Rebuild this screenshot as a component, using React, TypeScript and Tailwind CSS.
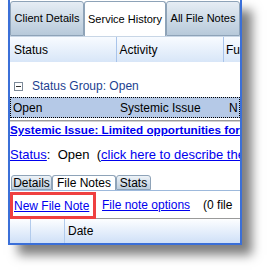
import React from "react";

function Tab({ label, active, w }: { label: string; active?: boolean; w: string }) {
  return (
    <div
      className={`${w} flex h-full items-center justify-center rounded-t-[3px] border border-[#8ea3b8] ${
        active ? "border-b-0 bg-white" : "bg-gradient-to-b from-[#e6edf4] to-[#b7c9da]"
      }`}
    >
      {label}
    </div>
  );
}

function SubTab({ label, active, w }: { label: string; active?: boolean; w: string }) {
  return (
    <div
      className={`${w} flex h-full items-center justify-center rounded-t-[3px] border border-[#8ea3b8] ${
        active ? "border-b-0 bg-white" : "bg-gradient-to-b from-[#eef3f8] to-[#bccddd]"
      }`}
    >
      {label}
    </div>
  );
}

export default function App() {
  return (
    <div className="h-[271px] w-[267px] bg-white font-['Liberation_Sans',Arial,sans-serif] text-[11px] text-black">
      <div className="ml-[8px] flex h-[245px] w-[234px] flex-col overflow-hidden border-x-2 border-b-2 border-[#3a6fd8] bg-white shadow-[10px_10px_10px_rgba(0,0,0,0.5)]">
        {/* main tabs */}
        <div className="flex h-[36px] shrink-0 pt-[1px] text-[11px]">
          <Tab label="Client Details" w="w-[74px]" />
          <Tab label="Service History" active w="w-[82px]" />
          <Tab label="All File Notes" w="w-[74px]" />
        </div>

        {/* grid header */}
        <div className="flex h-[26px] shrink-0 items-center whitespace-nowrap border-t border-[#c8d6e6] bg-gradient-to-b from-[#f8fbff] to-[#d8e6f8] text-[12px]">
          <div className="w-[108px] pl-[4px]">Status</div>
          <div className="h-full w-px bg-[#a9c4ea]" />
          <div className="w-[109px] pl-[3px]">Activity</div>
          <div className="h-full w-px bg-[#a9c4ea]" />
          <div className="pl-[2px]">Fu</div>
        </div>

        <div className="h-[16px] shrink-0" />

        {/* group row */}
        <div className="flex h-[16px] shrink-0 items-center gap-[9px] pl-[4px] text-[12px] text-[#1d3f91]">
          <div className="flex h-[9px] w-[9px] items-center justify-center border border-[#7d8a99] bg-white">
            <div className="h-px w-[5px] bg-[#333]" />
          </div>
          <span>Status Group: Open</span>
        </div>

        <div className="h-[3px] shrink-0" />

        {/* selected row */}
        <div className="flex h-[21px] shrink-0 items-center whitespace-nowrap border border-dotted border-black bg-[#b5c9e7] text-[12px]">
          <div className="w-[109px] pl-[2px]">Open</div>
          <div className="w-[109px]">Systemic Issue</div>
          <div>N</div>
        </div>

        <div className="mt-[2px] h-[2px] shrink-0 border-t border-b border-t-[#9b9b9b] border-b-[#d0d0d0]" />

        {/* detail link */}
        <div className="mt-[1px] flex h-[14px] shrink-0 items-center whitespace-nowrap text-[11.7px] font-bold text-[#0000ee] underline">
          Systemic Issue: Limited opportunities for
        </div>

        <div className="mt-[11px] flex h-[14px] shrink-0 items-center whitespace-nowrap text-[13px]">
          <span className="text-[#0000ee] underline">Status</span>
          <span>:&nbsp; Open&nbsp; (</span>
          <span className="text-[#0000ee] underline">click here to describe the</span>
        </div>

        {/* sub tabs */}
        <div className="mt-[13px] flex h-[15px] shrink-0 pl-[1px] text-[12px]">
          <SubTab label="Details" w="w-[41px]" />
          <SubTab label="File Notes" active w="w-[64px]" />
          <SubTab label="Stats" w="w-[35px]" />
        </div>
        <div className="h-px shrink-0 bg-[#9db9dc]" />

        {/* toolbar */}
        <div className="mt-[1px] flex h-[27px] shrink-0 items-stretch whitespace-nowrap text-[12px]">
          <div className="flex w-[86px] items-center border-[3px] border-[#ef4040] pl-[1px] text-[#0000ee] underline">
            New File Note
          </div>
          <div className="flex flex-1 items-center border-b border-[#9a9a9a] pl-[6px]">
            <span className="text-[#0000ee] underline">File note options</span>
            <span className="ml-[13px]">(0 file</span>
          </div>
        </div>

        {/* notes grid header */}
        <div className="flex flex-1 items-center whitespace-nowrap bg-gradient-to-b from-[#fdfeff] to-[#cfe0f7] text-[12px]">
          <div className="w-[20px]" />
          <div className="h-full w-px bg-[#b2cbec]" />
          <div className="w-[33px]" />
          <div className="h-full w-px bg-[#b2cbec]" />
          <div className="pl-[3px]">Date</div>
        </div>
      </div>
    </div>
  );
}
